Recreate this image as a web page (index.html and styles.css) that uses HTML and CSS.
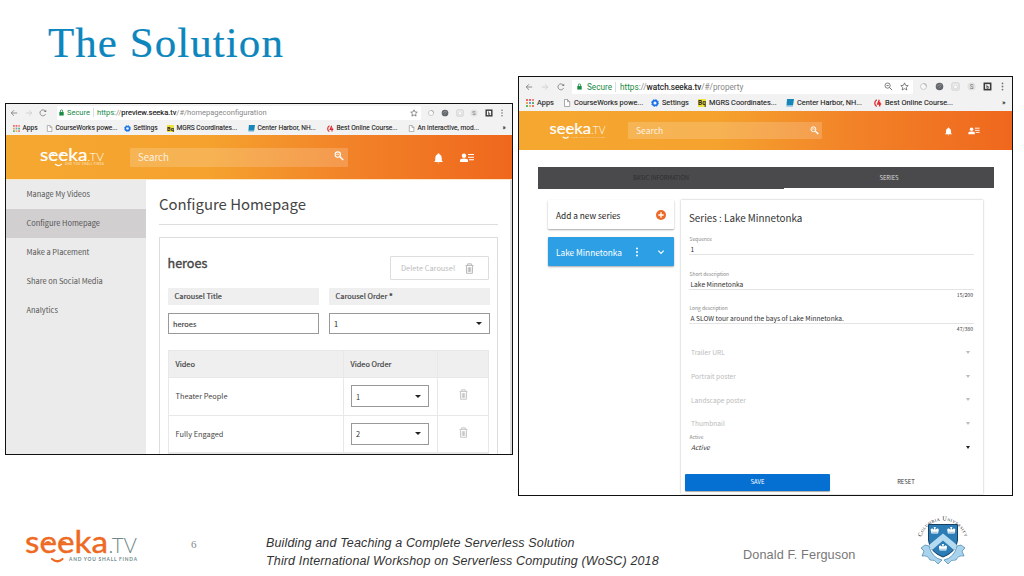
FILE: index.html
```html
<!DOCTYPE html>
<html lang="en">
<head>
<meta charset="utf-8">
<title>The Solution</title>
<link rel="stylesheet" href="styles.css">
</head>
<body>
<svg class="defs" aria-hidden="true">
  <defs>
    <symbol id="logo" viewBox="0 0 114 36">
      <g fill="currentColor" stroke="currentColor">
        <text class="logo-word" x="0" y="23.5" textLength="83" lengthAdjust="spacingAndGlyphs">seeka</text>
        <path d="M19.500 14q3.500-4 7 0zM35 14q3.500-4 7 0z" stroke="none"/>
        <path d="M27 30q5.500 4.500 10.500 0" fill="none" stroke-width="2.200" stroke-linecap="round"/>
      </g>
      <text class="logo-tv" x="83.500" y="23.500" textLength="28.500" lengthAdjust="spacingAndGlyphs">.TV</text>
      <text class="logo-tag" x="44" y="32" textLength="68">AND YOU SHALL FINDA</text>
    </symbol>
    <symbol id="back" viewBox="0 0 10 10"><path d="M9 5H1.500M5 1.500L1.500 5 5 8.500" fill="none" stroke="currentColor"/></symbol>
    <symbol id="forward" viewBox="0 0 10 10"><path d="M1 5h7.500M5 1.500L8.500 5 5 8.500" fill="none" stroke="currentColor"/></symbol>
    <symbol id="reload" viewBox="0 0 10 10"><path d="M8.200 6.500A3.700 3.700 0 1 1 7.800 2.500" fill="none" stroke="currentColor"/><path d="M9 .8v3H6z" fill="currentColor"/></symbol>
    <symbol id="lock" viewBox="0 0 8 8"><path d="M1.500 3.500h5V7.500h-5z" fill="#178a43"/><path d="M2.700 4V2.300a1.300 1.300 0 0 1 2.600 0V4" fill="none" stroke="#178a43" stroke-width=".9"/></symbol>
    <symbol id="star" viewBox="0 0 10 10"><path d="M5 1l1.200 2.700 2.900.3L7 6l.6 2.900L5 7.400 2.400 8.900 3 6 .9 4l2.900-.3z" fill="none" stroke="#555" stroke-width=".8"/></symbol>
    <symbol id="glass" viewBox="0 0 10 10"><circle cx="4" cy="4" r="2.900" fill="none" stroke="#666" stroke-width=".9"/><path d="M6.200 6.200L9 9M2.800 4h2.400" stroke="#666"/></symbol>
    <symbol id="ring" viewBox="0 0 10 10"><circle cx="5" cy="5" r="3.300" fill="#f8f8f8" stroke="#c5c5c5"/><path d="M5 1.700A3.300 3.300 0 0 1 8.300 5" fill="none" stroke="#aaa"/></symbol>
    <symbol id="globe" viewBox="0 0 10 10"><circle cx="5" cy="5" r="4.200" fill="#62666b"/><path d="M2 5q3-3 5-2M4 7l3-3" stroke="#999" fill="none"/></symbol>
    <symbol id="sq" viewBox="0 0 10 10"><rect x="1" y="1" width="8" height="8" rx="1" fill="#eee" stroke="#ccc"/><path d="M3 7V4.500q2-2 4 0V7z" fill="#fff" stroke="#ccc" stroke-width=".7"/></symbol>
    <symbol id="sk" viewBox="0 0 10 10"><circle cx="5" cy="5" r="4.500" fill="#e2e2e2"/><text x="5" y="7.500" text-anchor="middle" class="ext-s">S</text></symbol>
    <symbol id="bk" viewBox="0 0 10 10"><rect x="1.500" y="1.500" width="7" height="7" fill="#fff" stroke="#3a3a3a" stroke-width="1.800"/><path d="M4.300 3v4h1.600V5H4.300" fill="none" stroke="#333" stroke-width=".8"/></symbol>
    <symbol id="dots" viewBox="0 0 10 10"><g fill="currentColor"><circle cx="5" cy="1.600" r="1"/><circle cx="5" cy="5" r="1"/><circle cx="5" cy="8.400" r="1"/></g></symbol>
    <symbol id="apps" viewBox="0 0 8 8"><path d="M0 0h2v2H0zM3 0h2v2H3z" fill="#e66"/><path d="M6 0h2v2H6z" fill="#e88"/><path d="M0 3h2v2H0z" fill="#f0a050"/><path d="M3 3h2v2H3z" fill="#6a9bea"/><path d="M6 3h2v2H6zM0 6h2v2H0z" fill="#5cb36c"/><path d="M3 6h2v2H3z" fill="#e8b84c"/><path d="M6 6h2v2H6z" fill="#e77"/></symbol>
    <symbol id="page" viewBox="0 0 8 8"><path d="M1.500.5h3L6.700 2.700v4.800H1.500zM4.500.5v2.200h2.200" fill="#fff" stroke="#888" stroke-width=".7"/></symbol>
    <symbol id="gear" viewBox="0 0 8 8"><circle cx="4" cy="4" r="2.400" fill="none" stroke="#1a73e8" stroke-width="1.700"/><circle cx="4" cy="4" r="3.500" fill="none" stroke="#1a73e8" stroke-width=".9" stroke-dasharray="1.400 1.350"/></symbol>
    <symbol id="bq" viewBox="0 0 8 8"><path d="M0 0h8v8H0z" fill="#f0e23c"/><text x="4" y="6.300" text-anchor="middle" class="bq-t">Bq</text></symbol>
    <symbol id="harbor" viewBox="0 0 8 8"><path d="M1 0h7L7 6.500H.500z" fill="#1687b8"/><path d="M.5 6.500H7l-.3 1.300H.3z" fill="#8fc4da"/></symbol>
    <symbol id="ca" viewBox="0 0 8 8"><path d="M2.800.8Q.8 2 .8 4.300T2.700 7.500M5.300.8L3.600 5h3.600M5.700 2.800v4.600" fill="none" stroke="#e0282e" stroke-width="1.300"/></symbol>
    <symbol id="find" viewBox="0 0 10 10"><g fill="none" stroke="#fff"><circle cx="3.800" cy="3.600" r="2.700" stroke-width="1.100"/><path d="M6 5.800L9.200 9" stroke-width="1.500"/><path d="M2.300 3.700q1.500-1.300 3 0" stroke-width=".9"/></g></symbol>
    <symbol id="bell" viewBox="0 0 10 12"><path d="M5 .3q1 0 1 1Q8.600 2.200 8.600 5.500v2.800L10 10H0l1.400-1.700V5.500Q1.400 2.200 4 1.300q0-1 1-1zM3.800 10.600h2.400q-1.200 1.500-2.400 0z" fill="#fff"/></symbol>
    <symbol id="user" viewBox="0 0 14 10"><circle cx="4" cy="2.700" r="2.200" fill="#fff"/><path d="M0 9V7.300Q0 5.600 4 5.600T8 7.300V9z" fill="#fff"/><path d="M8 1.500h6M8 4.200h6M9 6.800h5" stroke="#fff" stroke-width="1.100"/></symbol>
    <symbol id="trash" viewBox="0 0 10 12"><g fill="none" stroke="currentColor" stroke-width=".9"><path d="M.7 2.600h8.600M3 2.500V.8h4v1.700M1.500 3l.3 8.300h6.400L8.500 3"/><path d="M3.600 4.500v5.300M5 4.500v5.300M6.400 4.500v5.300"/></g></symbol>
    <symbol id="crown" viewBox="0 0 10 9"><path d="M1 5.500Q0 2.500 2.500 2.700L4.300 4V2.500L3.700 1h2.600L5.700 2.500V4l1.800-1.300Q10 2.500 9 5.500L8.500 8h-7z" fill="#fff"/><path d="M2 6.600h6" stroke="#4088ba" stroke-width=".6"/></symbol>
  </defs>
</svg>

<div class="slide">
  <header class="slide-head"><h1>The Solution</h1></header>

  <div class="shots">
    <section class="win win-home">
      <div class="chrome">
        <div class="nav">
          <svg class="i-nav"><use href="#back"/></svg><svg class="i-nav dim"><use href="#forward"/></svg><svg class="i-nav"><use href="#reload"/></svg>
        </div>
        <div class="omni">
          <svg class="i-lock"><use href="#lock"/></svg><span class="secure">Secure</span>
          <span class="url"><em>https:</em>//<b>preview.seeka.tv</b>/#/homepageconfiguration</span>
          <svg class="i-ext omni-end"><use href="#star"/></svg>
        </div>
        <div class="exts">
          <svg class="i-ext"><use href="#ring"/></svg><svg class="i-ext"><use href="#globe"/></svg><svg class="i-ext"><use href="#sq"/></svg><svg class="i-ext"><use href="#sk"/></svg><svg class="i-ext"><use href="#bk"/></svg><svg class="i-ext i-menu"><use href="#dots"/></svg>
        </div>
      </div>
      <div class="marks">
        <span><svg><use href="#apps"/></svg>Apps</span><span><svg><use href="#page"/></svg>CourseWorks powe...</span><span><svg><use href="#gear"/></svg>Settings</span><span><svg><use href="#bq"/></svg>MGRS Coordinates...</span><span><svg><use href="#harbor"/></svg>Center Harbor, NH...</span><span><svg><use href="#ca"/></svg>Best Online Course...</span><span><svg><use href="#page"/></svg>An interactive, mod...</span><span>»</span>
      </div>
      <div class="appbar">
        <svg class="brand"><use href="#logo"/></svg>
        <div class="search"><span>Search</span><svg><use href="#find"/></svg></div>
        <svg class="i-bell"><use href="#bell"/></svg><svg class="i-user"><use href="#user"/></svg>
      </div>
      <div class="home-body">
        <nav class="side">
          <a>Manage My Videos</a><a class="on">Configure Homepage</a><a>Make a Placement</a><a>Share on Social Media</a><a>Analytics</a>
        </nav>
        <main class="home-main">
          <h2>Configure Homepage</h2>
          <div class="carousel">
            <div class="car-head"><h3>heroes</h3><button class="del">Delete Carousel<svg class="i-trash"><use href="#trash"/></svg></button></div>
            <div class="fields">
              <label>Carousel Title</label><label>Carousel Order <b>*</b></label>
              <div class="box">heroes</div><div class="box sel">1<i class="caret"></i></div>
            </div>
            <div class="table">
              <div class="row th"><span>Video</span><span>Video Order</span><span></span></div>
              <div class="row"><span>Theater People</span><span><span class="box sel">1<i class="caret"></i></span></span><span><svg class="i-trash"><use href="#trash"/></svg></span></div>
              <div class="row"><span>Fully Engaged</span><span><span class="box sel">2<i class="caret"></i></span></span><span><svg class="i-trash"><use href="#trash"/></svg></span></div>
            </div>
          </div>
        </main>
        <div class="scroll"></div>
      </div>
    </section>

    <section class="win win-series">
      <div class="chrome">
        <div class="nav">
          <svg class="i-nav"><use href="#back"/></svg><svg class="i-nav dim"><use href="#forward"/></svg><svg class="i-nav"><use href="#reload"/></svg>
        </div>
        <div class="omni">
          <svg class="i-lock"><use href="#lock"/></svg><span class="secure">Secure</span>
          <span class="url"><em>https:</em>//<b>watch.seeka.tv</b>/#/property</span>
          <svg class="i-ext omni-end"><use href="#glass"/></svg><svg class="i-ext"><use href="#star"/></svg>
        </div>
        <div class="exts">
          <svg class="i-ext"><use href="#ring"/></svg><svg class="i-ext"><use href="#globe"/></svg><svg class="i-ext"><use href="#sq"/></svg><svg class="i-ext"><use href="#sk"/></svg><svg class="i-ext"><use href="#bk"/></svg><svg class="i-ext i-menu"><use href="#dots"/></svg>
        </div>
      </div>
      <div class="marks">
        <span><svg><use href="#apps"/></svg>Apps</span><span><svg><use href="#page"/></svg>CourseWorks powe...</span><span><svg><use href="#gear"/></svg>Settings</span><span><svg><use href="#bq"/></svg>MGRS Coordinates...</span><span><svg><use href="#harbor"/></svg>Center Harbor, NH...</span><span><svg><use href="#ca"/></svg>Best Online Course...</span><span>»</span>
      </div>
      <div class="appbar">
        <svg class="brand"><use href="#logo"/></svg>
        <div class="search"><span>Search</span><svg><use href="#find"/></svg></div>
        <svg class="i-bell"><use href="#bell"/></svg><svg class="i-user"><use href="#user"/></svg>
      </div>
      <div class="tabs"><span class="tab-off">BASIC INFORMATION</span><span>SERIES</span></div>
      <div class="series-body">
        <div class="list">
          <div class="item add">Add a new series<svg viewBox="0 0 10 10"><circle cx="5" cy="5" r="5" fill="#ec6a25"/><path d="M5 2.300v5.400M2.300 5h5.400" stroke="#fff" stroke-width="1.300"/></svg></div>
          <div class="item cur"><span>Lake Minnetonka</span><svg class="more"><use href="#dots"/></svg><svg viewBox="0 0 10 10"><path d="M2.300 3.700L5 6.400l2.700-2.700" fill="none" stroke="#fff" stroke-width="1.200"/></svg></div>
        </div>
        <div class="form">
          <h2>Series : Lake Minnetonka</h2>
          <div class="fld"><small>Sequence</small><p>1</p></div>
          <div class="fld"><small>Short description</small><p>Lake Minnetonka</p><span class="count">15/200</span></div>
          <div class="fld"><small>Long description</small><p>A SLOW tour around the bays of Lake Minnetonka.</p><span class="count">47/380</span></div>
          <div class="opts">
            <div class="opt">Trailer URL<i class="caret"></i></div>
            <div class="opt">Portrait poster<i class="caret"></i></div>
            <div class="opt">Landscape poster<i class="caret"></i></div>
            <div class="opt">Thumbnail<i class="caret"></i></div>
          </div>
          <div class="active"><small>Active</small><p>Active<i class="caret"></i></p></div>
          <div class="acts"><button class="save">SAVE</button><button class="reset">RESET</button></div>
        </div>
      </div>
    </section>
  </div>

  <footer class="foot">
    <svg class="foot-logo"><use href="#logo"/></svg>
    <span class="num">6</span>
    <p class="talk"><span>Building and Teaching a Complete Serverless Solution</span><span>Third International Workshop on Serverless Computing (WoSC) 2018</span></p>
    <span class="author">Donald F. Ferguson</span>
    <svg class="crest" viewBox="0 0 54 56">
      <path id="arc" d="M5.500 25A22 21 0 0 1 48.500 25" fill="none"/>
      <text class="crest-t"><textPath href="#arc" textLength="58">Columbia University</textPath></text>
      <g fill="#a9d3ec" stroke="#3f82ad" stroke-width=".7">
        <path d="M9 33L5 36l3 3-2 5q6-1 8 4 5-1 8 4l4-4q-10-2-13-14z"/>
        <path d="M45 33l4 3-3 3 2 5q-6-1-8 4-5-1-8 4l-4-4q10-2 13-14z"/>
      </g>
      <path d="M12.500 12.500h29V28q-1 12-14.500 17Q13.500 40 12.500 28z" fill="#2c7db5" stroke="#173f63" stroke-width="1"/>
      <path d="M27 21.500L41 33q-1 3-3 5L27 28.500 16 38q-2-2-3-5z" fill="#b5dbf1"/>
      <use href="#crown" x="14" y="14" width="9.500" height="8.500"/><use href="#crown" x="30.500" y="14" width="9.500" height="8.500"/><use href="#crown" x="22.200" y="31" width="9.500" height="8.500"/>
    </svg>
  </footer>
</div>
</body>
</html>
```

FILE: styles.css
```css
* { box-sizing: border-box; }
body { margin: 0; background: #fff; }
h1, h2, h3, p { margin: 0; font-weight: 400; }
svg { display: block; flex: none; }
button { font: inherit; padding: 0; border: 0; background: none; flex: none; }
.defs { position: absolute; width: 0; height: 0; }

.slide { width: 1024px; height: 576px; overflow: hidden; background: #fff; }
.slide-head { height: 76px; padding: 18px 0 0 48px; }
.slide-head h1 { font: 43px/50px "Liberation Serif", serif; letter-spacing: 1.05px; color: #0c86bd; -webkit-text-stroke: .2px #0c86bd; }

.shots { display: flex; gap: 5px; padding-left: 5px; height: 420px; }
.win { border: 1px solid #111; background: #fff; overflow: hidden; font-family: "Noto Sans CJK SC", "Open Sans", sans-serif; color: #444; }
.win-home { width: 508px; height: 352px; margin-top: 27px; }
.win-series { width: 495px; height: 420px; }

/* browser chrome */
.chrome, .marks { display: flex; align-items: center; background: #f2f2f2; font-family: Roboto, sans-serif; }
.chrome { height: 17px; color: #777; }
.nav { display: flex; }
.dim { color: #ccc; }
.omni { display: flex; align-items: center; background: #fff; height: 14px; border-radius: 1px; white-space: nowrap; }
.secure { color: #178a43; border-right: 1px solid #ddd; }
.url { color: #888; }
.url em { font-style: normal; color: #178a43; }
.url b { font-weight: 400; color: #222; -webkit-text-stroke: .15px #222; }
.omni-end { margin-left: auto; }
.exts { display: flex; }
.ext-s { font: 7px Roboto, sans-serif; fill: #777; }
.bq-t { font: bold 6.500px Roboto, sans-serif; fill: #222; }
.marks { display: grid; height: 14px; color: #222; white-space: nowrap; -webkit-text-stroke: .1px #222; }
.marks svg { -webkit-text-stroke: 0; }
.marks span { display: flex; align-items: center; }

.win-home .chrome { font-size: 7.500px; padding-left: 4px; }
.win-home .nav { width: 47px; gap: 6.500px; }
.win-home .i-nav { width: 8px; height: 8px; }
.win-home .omni { width: 364px; padding: 0 3px 0 1px; }
.i-lock { width: 7px; height: 7px; margin-right: 2px; }
.win-home .secure { width: 27px; margin-right: 3px; }
.win-home .exts { gap: 6.400px; padding-left: 6px; }
.win-home .i-ext { width: 8px; height: 8px; }
.win-home .i-menu { margin-left: -1px; }
.win-home .marks { font-size: 6.600px; padding-left: 6.500px; grid-template-columns: 33px 78px 43px 81px 79px 81px 95px 10px; }
.win-home .marks svg { width: 7px; height: 7px; margin-right: 3px; }

.win-series .chrome { height: 19px; font-size: 8.200px; padding-left: 6px; }
.win-series .nav { width: 47px; gap: 8px; }
.win-series .i-nav { width: 8px; height: 8px; }
.win-series .omni { width: 341px; padding: 0 4px; }
.win-series .i-lock { margin-right: 4px; }
.win-series .secure { width: 29px; margin-right: 4px; }
.win-series .omni .i-ext + .i-ext { margin-left: 7px; }
.win-series .exts { gap: 7px; padding-left: 6px; }
.win-series .i-ext { width: 9px; height: 9px; }
.win-series .i-menu { margin-left: -1px; }
.win-series .marks { height: 15px; font-size: 7.350px; padding: 0 0 2px 7px; grid-template-columns: 37px 88px 47px 88px 88px 128px 10px; }
.win-series .marks svg { width: 8px; height: 8px; margin-right: 3px; }

/* application bar */
.appbar { display: flex; align-items: center; background: linear-gradient(90deg, #f5a830 0%, #f5a22e 40%, #f28228 68%, #ef671d 100%); }
.brand { color: #fff; }
.brand, .foot-logo { overflow: visible; }
.logo-word { font: 31px Lato, sans-serif; stroke-width: .4px; }
.logo-tv { font: 300 21.500px Lato, sans-serif; fill: var(--tv, #fff); }
.logo-tag { font: bold 4.800px Lato, sans-serif; fill: var(--tv, rgba(255, 255, 255, .6)); }
.search { display: flex; align-items: center; justify-content: space-between; background: rgba(255, 255, 255, .18); color: rgba(255, 255, 255, .85); border-radius: 1px; }
.win-home .appbar { height: 45px; padding-left: 34px; border-bottom: 1px solid #fce6c4; }
.win-home .brand { width: 65px; height: 21px; margin: 0 25px 0 0; }
.win-home .search { width: 218px; height: 19px; padding: 0 4px 0 8px; font-size: 9.700px; line-height: 19px; }
.win-home .search svg { width: 10px; height: 10px; margin-top: -2px; }
.win-home .i-bell { width: 9px; height: 11px; margin: 2px 17px 0 86px; }
.win-home .i-user { width: 14px; height: 10px; margin-top: 1px; }
.win-series .appbar { height: 39px; padding-left: 30px; }
.win-series .brand { width: 58px; height: 18px; margin: 1px 21px 0 0; }
.win-series .search { width: 194px; height: 17px; padding: 0 3px 0 8px; font-size: 8.500px; line-height: 17px; }
.win-series .search svg { width: 9px; height: 9px; }
.win-series .i-bell { width: 7px; height: 9px; margin: 2px 16px 0 123px; }
.win-series .i-user { width: 12px; height: 8px; margin-top: 1px; }

/* homepage configuration */
.home-body { display: flex; height: 274px; }
.side { width: 140px; background: #ebebeb; }
.side a { display: block; height: 29px; padding-left: 20.500px; font-size: 7.450px; line-height: 28px; color: #555; }
.side .on { background: #d1cfd0; }
.home-main { width: 364px; padding: 8px 12px 0 13px; }
.home-main h2 { height: 37px; font-size: 14.900px; line-height: 32px; border-bottom: 1px solid #ddd; width: 339px; }
.carousel { width: 339px; height: 240px; margin-top: 12px; border: 1px solid #ddd; border-bottom: 0; padding: 18px 8px 0 7.500px; font-size: 7.400px; border-radius: 1px; }
.car-head { display: flex; justify-content: space-between; height: 24px; }
.car-head h3 { font-size: 12.600px; line-height: 14px; -webkit-text-stroke: .35px #444; }
.del { display: flex; align-items: center; width: 99px; height: 24px; padding-left: 10px; border: 1px solid #ddd; color: #bbb; border-radius: 1px; line-height: 22px; }
.del svg { margin-left: 10px; color: #aaa; }
.i-trash { width: 9px; height: 11px; color: #bbb; }
.fields { display: grid; grid-template-columns: 151px 161px; column-gap: 10px; row-gap: 8px; margin-top: 8px; }
.fields label, .th { background: #efefef; -webkit-text-stroke: .2px #444; }
.fields label { height: 17px; line-height: 16px; padding-left: 7px; }
.box { display: flex; align-items: center; justify-content: space-between; height: 21px; border: 1px solid #999; padding: 0 7px 0 4.500px; line-height: 19px; color: #333; }
.fields .box { -webkit-text-stroke: .1px #333; }
.caret { border: 3px solid transparent; border-top: 3.500px solid #222; border-bottom: 0; }
.table { margin-top: 16px; border: 1px solid #e8e8e8; }
.row { display: grid; grid-template-columns: 175px 94px 52px; height: 37.500px; border-bottom: 1px solid #e8e8e8; }
.row.th { height: 27px; }
.row > span { display: flex; align-items: center; padding-left: 7px; border-right: 1px solid #e8e8e8; line-height: 20px; }
.row > span:last-child { padding: 0 0 3px 21px; border-right: 0; }
.row .box { width: 78px; height: 22px; }
.scroll { width: 2px; background: #ddd; }

/* series editor */
.tabs { display: grid; grid-template-columns: 246px 210px; width: 456px; height: 21px; margin: 17px 0 0 19px; background: #4a4a4c; color: #ddd; font-size: 5.800px; line-height: 21px; text-align: center; }
.tab-off { color: #2d2d2f; box-shadow: 0 1px #4a4a4c; }
.series-body { display: flex; gap: 7px; padding: 12px 0 0 29px; }
.list { width: 126px; }
.item { display: flex; align-items: center; justify-content: space-between; height: 29px; padding: 0 8px; font-size: 8.300px; line-height: 28px; box-shadow: 0 1px 2px rgba(0, 0, 0, .35); border-radius: 1px; }
.item.add { color: #222; }
.item svg { width: 10px; height: 10px; }
.item.cur { margin-top: 8px; background: #2c9fe5; color: #fff; }
.item .more { margin-left: -3px; }
.form { width: 302px; height: 294px; padding: 0 9px 0 8px; box-shadow: 0 0 2px rgba(0, 0, 0, .3); font-size: 6.650px; color: #333; }
.form h2 { font-size: 9.850px; line-height: 37px; height: 33px; }
.form small { display: block; font-size: 4.900px; line-height: 8px; height: 8px; color: #888; padding-left: .5px; }
.fld { height: 34.500px; padding-top: 2px; }
.fld p { height: 12px; line-height: 13px; padding-left: 1.500px; border-bottom: 1px solid #e4e4e4; }
.count { display: block; text-align: right; font-size: 5.100px; line-height: 8px; padding: 1px 1px 0 0; }
.opts { margin-top: 4px; height: 92px; }
.opt { display: flex; align-items: center; justify-content: space-between; height: 23.700px; line-height: 14px; padding: 0 4px 0 2px; color: #bbb; }
.opt .caret { border-width: 2.500px; border-top: 3px solid #bbb; border-bottom: 0; }
.active p { display: flex; justify-content: space-between; align-items: center; font-style: italic; line-height: 13px; padding: 0 4px 0 2px; }
.active .caret { border-width: 2.500px; border-top: 3px solid #222; border-bottom: 0; }
.acts { display: flex; align-items: center; margin: 20px 0 0 -4px; font-size: 5.900px; line-height: 16px; }
.save { width: 145px; height: 17px; background: #0570d2; color: #fff; border-radius: 1px; box-shadow: 0 1px 1px #aaa; }
.reset { width: 152px; color: #333; }

/* footer */
.foot { display: flex; height: 80px; }
.foot-logo { width: 114px; height: 36px; margin: 33px 0 0 25px; color: #ee6a22; --tv: #70888c; }
.num { width: 75px; margin: 40px 0 0 52px; font: 11px/16px "Liberation Serif", serif; color: #888; }
.talk { width: 477px; padding-top: 38px; font: italic 12.500px/18px "Liberation Sans", sans-serif; letter-spacing: .145px; color: #333; }
.talk span { display: block; }
.author { width: 174px; padding-top: 50px; font: 12.700px/18px "Liberation Sans", sans-serif; letter-spacing: .1px; color: #777; white-space: nowrap; }
.crest { width: 54px; height: 56px; margin: 16px 0 0 -1px; }
.crest-t { font: 6px "Liberation Serif", serif; fill: #222; font-variant: small-caps; }
```
